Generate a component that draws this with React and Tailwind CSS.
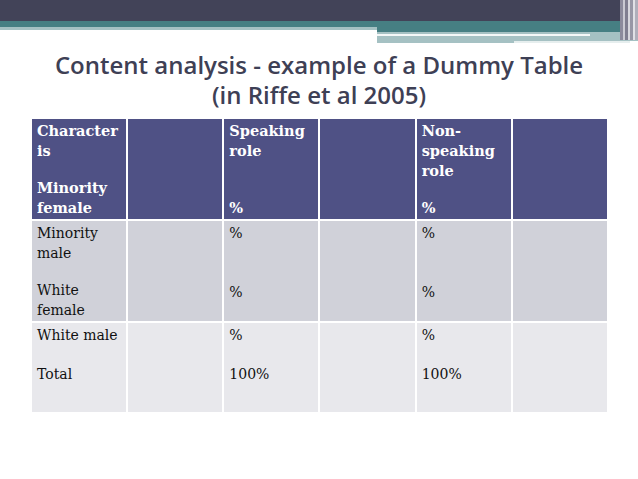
const serif = { fontFamily: '"DejaVu Serif", "Liberation Serif", serif' };

function Cell({ lines, bg, last }) {
  return (
    <div className={`flex flex-col pl-[5px] pr-[2px] pt-[2px] pb-[1px] ${bg}`}>
      {lines.map((l, i) =>
        typeof l === "number" ? (
          <div key={i} style={{ height: l }} />
        ) : (
          <div key={i} className="leading-[20px] whitespace-nowrap">
            {l}
          </div>
        )
      )}
      {last && <div className="mt-auto leading-[20px]">{last}</div>}
    </div>
  );
}

export default function App() {
  const head = "bg-[#4f5185] text-white font-bold text-[14.5px]";
  const r2 = "bg-[#d0d1d9] text-[#111] text-[14px]";
  const r3 = "bg-[#e8e8ec] text-[#111] text-[14px]";
  return (
    <div className="w-[638px] h-[479px] bg-white overflow-hidden relative">
      <div className="h-[21px] bg-[#424358]" />
      <div className="flex">
        <div className="w-[377px]">
          <div className="h-[6px] bg-[#467f83]" />
          <div className="h-[3px] bg-[#a5c1c3]" />
        </div>
        <div className="flex-1">
          <div className="h-[11px] bg-[#467f83]" />
          <div className="h-[2px] bg-[#a5c1c3]" />
          <div className="flex h-[2px] bg-[#a5c1c3]">
            <div className="w-[213px] bg-[#f4f8f8]" />
          </div>
          <div className="h-[5px] bg-[#a5c1c3]" />
          <div className="flex h-[2px]">
            <div className="w-[137px] bg-[#a5c1c3]" />
            <div className="w-[116px] bg-[#e6eeee]" />
          </div>
        </div>
      </div>
      <div className="absolute top-0 right-0 w-[18px] h-[40px] flex">
        <div className="w-[3px] bg-[#8b8a9c]" />
        <div className="w-[2px] bg-[#c9c9d2]" />
        <div className="w-[3px] bg-[#7f7e90]" />
        <div className="w-[2px] bg-[#d7d7de]" />
        <div className="w-[3px] bg-[#9897a6]" />
        <div className="w-[2px] bg-[#e1e1e6]" />
        <div className="w-[3px] bg-[#b0afbb]" />
      </div>

      <div
        className="mt-[7px] text-center text-[24px] leading-[30px] text-[#3e4055]"
        style={{ fontFamily: '"Open Sans", Lato, sans-serif', fontWeight: 600 }}
      >
        <div>Content analysis - example of a Dummy Table</div>
        <div>(in Riffe et al 2005)</div>
      </div>

      <div
        className="ml-[32px] mt-[9px] w-[575px] grid grid-cols-6 gap-[2px] bg-white"
        style={{ ...serif, gridTemplateRows: "100px 100px 89px" }}
      >
        <Cell bg={head} lines={["Character", "is", 17, "Minority", "female"]} />
        <Cell bg={head} lines={[]} />
        <Cell bg={head} lines={["Speaking", "role"]} last="%" />
        <Cell bg={head} lines={[]} />
        <Cell bg={head} lines={["Non-", "speaking", "role"]} last="%" />
        <Cell bg={head} lines={[]} />

        <Cell bg={r2} lines={["Minority", "male", 19, "White", "female"]} />
        <Cell bg={r2} lines={[]} />
        <Cell bg={r2} lines={["%", 39, "%"]} />
        <Cell bg={r2} lines={[]} />
        <Cell bg={r2} lines={["%", 39, "%"]} />
        <Cell bg={r2} lines={[]} />

        <Cell bg={r3} lines={["White male", 19, "Total"]} />
        <Cell bg={r3} lines={[]} />
        <Cell bg={r3} lines={["%", 19, "100%"]} />
        <Cell bg={r3} lines={[]} />
        <Cell bg={r3} lines={["%", 19, "100%"]} />
        <Cell bg={r3} lines={[]} />
      </div>
    </div>
  );
}
